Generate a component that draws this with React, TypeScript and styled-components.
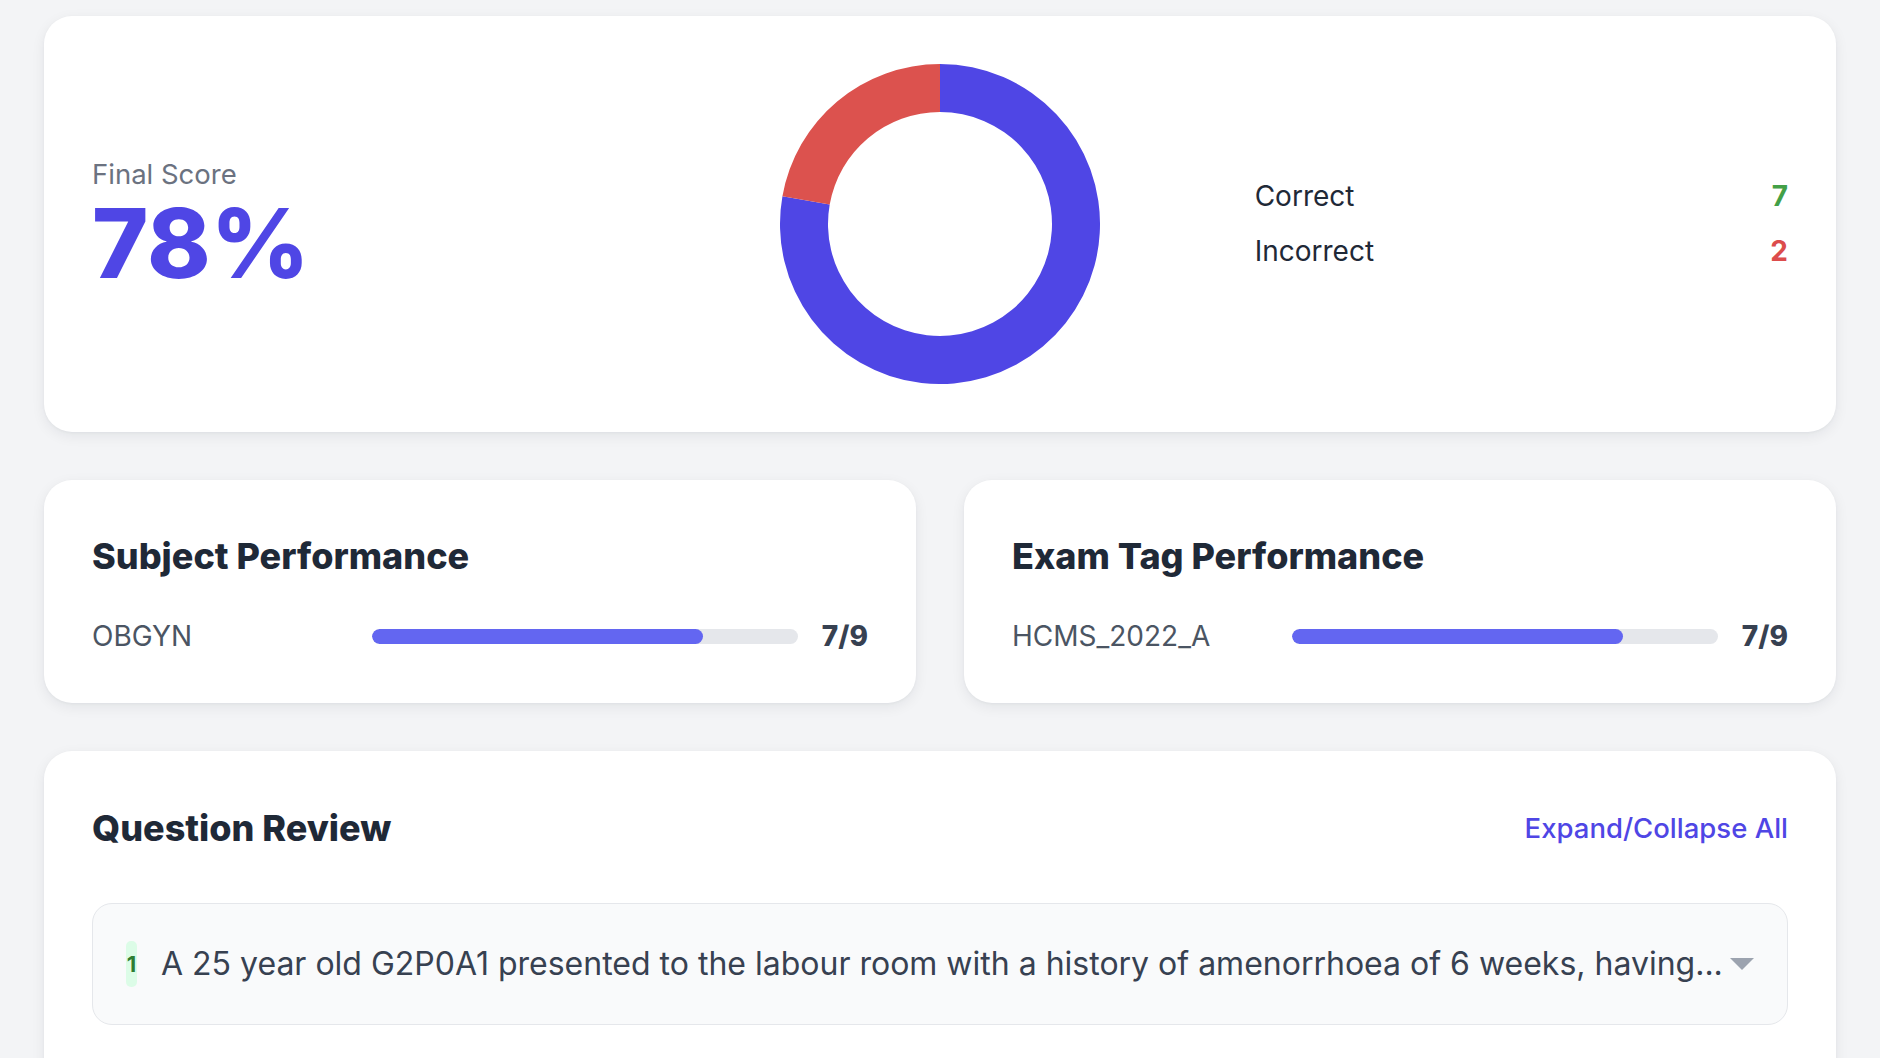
import styled, { createGlobalStyle } from 'styled-components';

const GlobalStyle = createGlobalStyle`
  * {
    box-sizing: border-box;
  }

  body {
    margin: 0;
    background: #f3f4f6;
    font-family: Inter, "Noto Sans", "Liberation Sans", sans-serif;
    color: #1f2937;
  }
`;

const result = {
  correct: 7,
  incorrect: 2,
  subjects: [{ name: 'OBGYN', correct: 7, total: 9 }],
  tags: [{ name: 'HCMS_2022_A', correct: 7, total: 9 }],
  questions: [
    {
      id: 1,
      isCorrect: true,
      text: 'A 25 year old G2P0A1 presented to the labour room with a history of amenorrhoea of 6 weeks, having...',
    },
  ],
};

const polar = (cx: number, cy: number, r: number, deg: number) => {
  const rad = ((deg - 90) * Math.PI) / 180;
  return [cx + r * Math.cos(rad), cy + r * Math.sin(rad)];
};

const arcPath = (start: number, end: number, outer: number, inner: number) => {
  const c = outer;
  const large = end - start > 180 ? 1 : 0;
  const [x1, y1] = polar(c, c, outer, start);
  const [x2, y2] = polar(c, c, outer, end);
  const [x3, y3] = polar(c, c, inner, end);
  const [x4, y4] = polar(c, c, inner, start);
  return `M${x1} ${y1} A${outer} ${outer} 0 ${large} 1 ${x2} ${y2} L${x3} ${y3} A${inner} ${inner} 0 ${large} 0 ${x4} ${y4} Z`;
};

const Donut = ({ correct, incorrect }: { correct: number; incorrect: number }) => {
  const total = correct + incorrect;
  const split = (correct / total) * 360;
  return (
    <svg width="320" height="320" viewBox="0 0 320 320">
      <path d={arcPath(0, split, 160, 112)} fill="#4f46e5" />
      <path d={arcPath(split, 360, 160, 112)} fill="#dc524e" />
    </svg>
  );
};

const App = () => {
  const total = result.correct + result.incorrect;
  const score = Math.round((result.correct / total) * 100);

  return (
    <>
      <GlobalStyle />
      <Page>
        <ScoreCard>
          <ScoreBlock>
            <ScoreLabel>Final Score</ScoreLabel>
            <ScoreValue>{score}%</ScoreValue>
          </ScoreBlock>
          <ChartCell>
            <Donut correct={result.correct} incorrect={result.incorrect} />
          </ChartCell>
          <Legend>
            <LegendRow>
              <LegendLabel>Correct</LegendLabel>
              <LegendCount $tone="good">{result.correct}</LegendCount>
            </LegendRow>
            <LegendRow>
              <LegendLabel>Incorrect</LegendLabel>
              <LegendCount $tone="bad">{result.incorrect}</LegendCount>
            </LegendRow>
          </Legend>
        </ScoreCard>

        <PerfGrid>
          <PerfCard>
            <CardTitle>Subject Performance</CardTitle>
            {result.subjects.map((s) => (
              <PerfRow key={s.name}>
                <PerfLabel>{s.name}</PerfLabel>
                <Track>
                  <Fill style={{ width: `${(s.correct / s.total) * 100}%` }} />
                </Track>
                <PerfValue>
                  {s.correct}/{s.total}
                </PerfValue>
              </PerfRow>
            ))}
          </PerfCard>
          <PerfCard>
            <CardTitle>Exam Tag Performance</CardTitle>
            {result.tags.map((t) => (
              <PerfRow key={t.name}>
                <PerfLabel>{t.name}</PerfLabel>
                <Track>
                  <Fill style={{ width: `${(t.correct / t.total) * 100}%` }} />
                </Track>
                <PerfValue>
                  {t.correct}/{t.total}
                </PerfValue>
              </PerfRow>
            ))}
          </PerfCard>
        </PerfGrid>

        <ReviewCard>
          <ReviewHeader>
            <CardTitle>Question Review</CardTitle>
            <ToggleAll type="button">Expand/Collapse All</ToggleAll>
          </ReviewHeader>
          {result.questions.map((q) => (
            <QuestionItem key={q.id}>
              <QuestionNumber $correct={q.isCorrect}>{q.id}</QuestionNumber>
              <QuestionText>{q.text}</QuestionText>
              <Caret width="24" height="12" viewBox="0 0 24 12">
                <polygon points="0,0 24,0 12,12" fill="#9ca3af" />
              </Caret>
            </QuestionItem>
          ))}
        </ReviewCard>
      </Page>
    </>
  );
};

const Page = styled.div`
  display: flex;
  flex-direction: column;
  gap: 48px;
  padding: 16px 44px 48px;
`;

const Card = styled.section`
  background: #ffffff;
  border-radius: 28px;
  box-shadow: 0 4px 14px rgba(17, 24, 39, 0.07), 0 1px 3px rgba(17, 24, 39, 0.04);
`;

const ScoreCard = styled(Card)`
  display: grid;
  grid-template-columns: 1fr 1fr 1fr;
  gap: 48px;
  align-items: center;
  padding: 48px;
`;

const ScoreBlock = styled.div`
  display: flex;
  flex-direction: column;
`;

const ScoreLabel = styled.span`
  font-size: 27.5px;
  line-height: 1.25;
  color: #6b7280;
`;

const ScoreValue = styled.span`
  margin-top: 3px;
  font-size: 96px;
  line-height: 1;
  font-weight: 800;
  color: #4f46e5;
`;

const ChartCell = styled.div`
  display: flex;
  justify-content: center;
  align-items: center;
`;

const Legend = styled.div`
  display: flex;
  flex-direction: column;
  gap: 16px;
`;

const LegendRow = styled.div`
  display: flex;
  justify-content: space-between;
  align-items: center;
  font-size: 28px;
  line-height: 39px;
`;

const LegendLabel = styled.span`
  color: #1f2937;
`;

const LegendCount = styled.span<{ $tone: 'good' | 'bad' }>`
  font-weight: 700;
  color: ${({ $tone }) => ($tone === 'good' ? '#43a047' : '#dc4c4c')};
`;

const PerfGrid = styled.div`
  display: grid;
  grid-template-columns: 1fr 1fr;
  gap: 48px;
`;

const PerfCard = styled(Card)`
  padding: 56px 48px 47px;
`;

const CardTitle = styled.h2`
  margin: 0;
  font-size: 36px;
  line-height: 40px;
  font-weight: 800;
  color: #1f2937;
`;

const PerfRow = styled.div`
  display: flex;
  align-items: center;
  gap: 24px;
  height: 40px;
  margin-top: 40px;
`;

const PerfLabel = styled.span`
  width: 256px;
  flex-shrink: 0;
  font-size: 28px;
  line-height: 40px;
  color: #4b5563;
`;

const Track = styled.div`
  flex: 1;
  height: 15px;
  border-radius: 999px;
  background: #e5e7eb;
  overflow: hidden;
`;

const Fill = styled.div`
  height: 100%;
  border-radius: 999px;
  background: #6366f1;
`;

const PerfValue = styled.span`
  font-size: 28px;
  font-weight: 800;
  color: #374151;
`;

const ReviewCard = styled(Card)`
  padding: 57px 48px 48px;
  min-height: 400px;
`;

const ReviewHeader = styled.div`
  display: flex;
  justify-content: space-between;
  align-items: center;
  margin-bottom: 55px;
`;

const ToggleAll = styled.button`
  border: none;
  background: none;
  padding: 0;
  font-family: inherit;
  font-size: 27.5px;
  font-weight: 500;
  color: #4f46e5;
  cursor: pointer;
`;

const QuestionItem = styled.div`
  display: flex;
  align-items: center;
  padding: 36px 33px;
  border: 1px solid #e5e7eb;
  border-radius: 20px;
  background: #f9fafb;
`;

const QuestionNumber = styled.span<{ $correct: boolean }>`
  display: flex;
  align-items: center;
  justify-content: center;
  flex-shrink: 0;
  width: 11px;
  height: 46px;
  border-radius: 5px;
  background: ${({ $correct }) => ($correct ? '#dcfce7' : '#fee2e2')};
  color: ${({ $correct }) => ($correct ? '#2e7d32' : '#b91c1c')};
  font-size: 22px;
  font-weight: 700;
`;

const QuestionText = styled.span`
  margin-left: 24px;
  font-size: 32px;
  line-height: 48px;
  color: #374151;
  white-space: nowrap;
`;

const Caret = styled.svg`
  flex-shrink: 0;
  margin-left: auto;
`;

export default App;
